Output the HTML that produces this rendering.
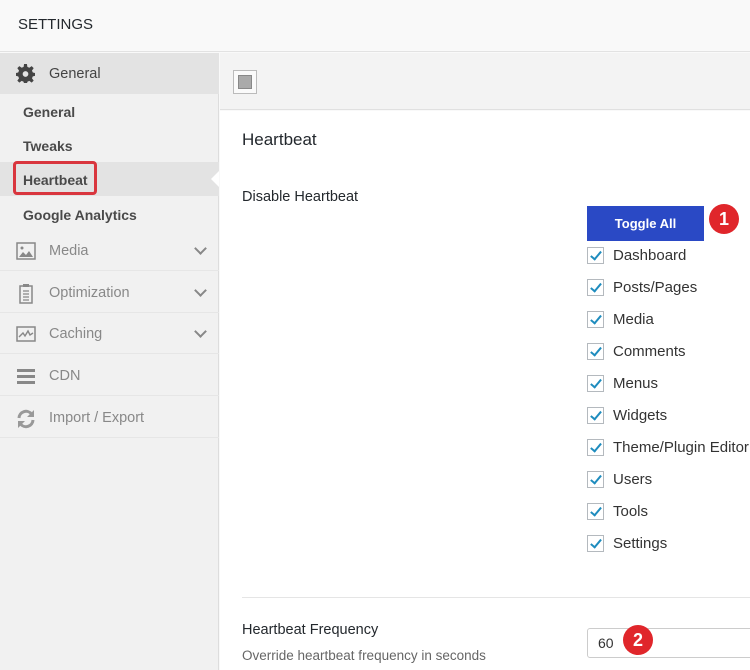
<!DOCTYPE html>
<html><head><style>
*{margin:0;padding:0;box-sizing:border-box}
body{width:750px;height:670px;overflow:hidden;background:#f9f9f9;font-family:"Liberation Sans",sans-serif;color:#23282d;position:relative}
.abs{position:absolute}
#hdr{left:0;top:0;width:750px;height:52px;background:#f9f9f9;border-bottom:1px solid #e2e2e2}
#hdr span{position:absolute;left:18px;top:16px;font-size:15px;color:#23282d}
#side{left:0;top:53px;width:219px;height:617px;background:#f1f1f1;border-right:1px solid #ddd}
.gen{position:absolute;left:0;top:0;width:219px;height:41px;background:#e3e3e3}
.sub{left:23px;font-weight:bold;color:#4a4a4a;font-size:14px}
.mn{position:absolute;left:0;width:219px;height:41px;border-bottom:1px solid #e6e6e6;color:#888;font-size:14.5px}
.mn span{position:absolute;left:49px;top:13px}
.mn svg{position:absolute;left:16px;top:12px}
.chev{position:absolute;left:196px;top:14px;width:9px;height:9px;border-right:2.5px solid #888;border-bottom:2.5px solid #888;transform:rotate(45deg)}
#tool{left:220px;top:53px;width:530px;height:57px;background:#f3f3f3;border-bottom:1px solid #e0e0e0}
#main{left:220px;top:111px;width:530px;height:559px;background:#fff}
.cb{position:absolute;left:587px;width:17px;height:17px;border:1px solid #b4b9be;background:#fff}
.cb:after{content:"";position:absolute;left:5px;top:1px;width:4px;height:9px;border-right:2.5px solid #1e8cbe;border-bottom:2.5px solid #1e8cbe;transform:rotate(40deg)}
.lb{position:absolute;left:613px;font-size:15px;color:#333}
.badge{position:absolute;width:30px;height:30px;border-radius:50%;background:#e0262b;color:#fff;font-weight:bold;font-size:18px;text-align:center;line-height:30px}
</style></head><body>
<div id="hdr" class="abs"><span>SETTINGS</span></div>
<div id="side" class="abs">
 <div class="gen">
  <svg class="abs" style="left:16px;top:11px" width="19" height="19" viewBox="0 0 20 20"><path fill="#444" d="M8.5 0h3l.5 3 2 1 2.5-1.8 2.1 2.1L16.8 7l.9 2 2.3.5v3l-2.3.5-.9 2 1.8 2.5-2.1 2.1-2.5-1.8-2 .9-.5 2.3h-3l-.5-2.3-2-.9-2.5 1.8-2.1-2.1L3.2 15l-.9-2L0 12.5v-3L2.3 9l.9-2-1.8-2.7 2.1-2.1L6 4l2-1z"/><circle cx="10" cy="10.5" r="3" fill="#e3e3e3"/></svg>
  <span class="abs" style="left:49px;top:13px;font-size:14.5px;color:#444">General</span>
 </div>
 <span class="abs sub" style="top:51px">General</span>
 <span class="abs sub" style="top:85px">Tweaks</span>
 <div class="abs" style="left:0;top:109px;width:219px;height:34px;background:#e3e3e3"></div>
 <div class="abs" style="left:211px;top:118px;width:0;height:0;border-top:8px solid transparent;border-bottom:8px solid transparent;border-right:8px solid #fff"></div>
 <div class="abs" style="left:13px;top:108px;width:84px;height:34px;border:3px solid #d9363e;border-radius:4px"></div>
 <span class="abs sub" style="top:119px">Heartbeat</span>
 <span class="abs sub" style="top:154px">Google Analytics</span>
 <div class="mn" style="top:177px"><svg width="20" height="18" viewBox="0 0 20 18"><rect x="1" y="1" width="18" height="16" fill="none" stroke="#888" stroke-width="1.5"/><path d="M3 15l4-5 3 3 3-4 4 6z" fill="#888"/><circle cx="6" cy="6" r="1.5" fill="#888"/></svg><span>Media</span><b class="chev"></b></div>
 <div class="mn" style="top:219px"><svg width="20" height="20" viewBox="0 0 20 20"><rect x="4" y="2" width="12" height="17" fill="none" stroke="#888" stroke-width="1.5"/><rect x="7" y="0" width="6" height="3" fill="#888"/><path d="M7 7h6M7 10h6M7 13h6M7 16h6" stroke="#888" stroke-width="1.3"/></svg><span>Optimization</span><b class="chev"></b></div>
 <div class="mn" style="top:260px"><svg width="20" height="18" viewBox="0 0 20 18"><rect x="1" y="2" width="18" height="14" fill="none" stroke="#888" stroke-width="1.5"/><path d="M3 12l4-4 2 3 3-5 2 4 3-2" fill="none" stroke="#888" stroke-width="1.4"/></svg><span>Caching</span><b class="chev"></b></div>
 <div class="mn" style="top:302px"><svg width="20" height="18" viewBox="0 0 20 18"><rect x="1" y="2" width="18" height="3" fill="#888"/><rect x="1" y="8" width="18" height="3" fill="#888"/><rect x="1" y="14" width="18" height="3" fill="#888"/></svg><span>CDN</span></div>
 <div class="mn" style="top:344px"><svg width="20" height="20" viewBox="0 0 20 20"><path d="M3 9a7 7 0 0 1 12.5-4M17 11a7 7 0 0 1-12.5 4" fill="none" stroke="#999" stroke-width="3"/><path d="M18 1v7h-7z M2 19v-7h7z" fill="#999"/></svg><span>Import / Export</span></div>
</div>
<div id="tool" class="abs"><div class="abs" style="left:13px;top:17px;width:24px;height:24px;border:1px solid #bbb;background:#fafafa"><div class="abs" style="left:4px;top:4px;width:14px;height:14px;background:#aaa;border:1px solid #888"></div></div></div>
<div id="main" class="abs">
 <span class="abs" style="left:22px;top:19px;font-size:17px">Heartbeat</span>
 <span class="abs" style="left:22px;top:78px;font-size:14.5px">Disable Heartbeat</span>
 <div class="abs" style="left:22px;top:486px;width:508px;height:1px;background:#e5e5e5"></div>
 <span class="abs" style="left:22px;top:511px;font-size:14.5px">Heartbeat Frequency</span>
 <span class="abs" style="left:22px;top:537px;font-size:13.5px;color:#666">Override heartbeat frequency in seconds</span>
</div>
<div class="abs" style="left:587px;top:206px;width:117px;height:35px;background:#2a49c5;color:#fff;font-weight:bold;font-size:13px;text-align:center;line-height:35px">Toggle All</div>
<div class="badge" style="left:709px;top:204px">1</div>
<div class="cb" style="top:247px"></div><span class="lb" style="top:247px">Dashboard</span>
<div class="cb" style="top:279px"></div><span class="lb" style="top:279px">Posts/Pages</span>
<div class="cb" style="top:311px"></div><span class="lb" style="top:311px">Media</span>
<div class="cb" style="top:343px"></div><span class="lb" style="top:343px">Comments</span>
<div class="cb" style="top:375px"></div><span class="lb" style="top:375px">Menus</span>
<div class="cb" style="top:407px"></div><span class="lb" style="top:407px">Widgets</span>
<div class="cb" style="top:439px"></div><span class="lb" style="top:439px">Theme/Plugin Editor</span>
<div class="cb" style="top:471px"></div><span class="lb" style="top:471px">Users</span>
<div class="cb" style="top:503px"></div><span class="lb" style="top:503px">Tools</span>
<div class="cb" style="top:535px"></div><span class="lb" style="top:535px">Settings</span>
<div class="abs" style="left:587px;top:628px;width:170px;height:30px;border:1px solid #ccc;border-radius:3px;background:#fff"><span class="abs" style="left:10px;top:6px;font-size:14px;color:#333">60</span></div>
<div class="badge" style="left:623px;top:625px">2</div>
</body></html>
